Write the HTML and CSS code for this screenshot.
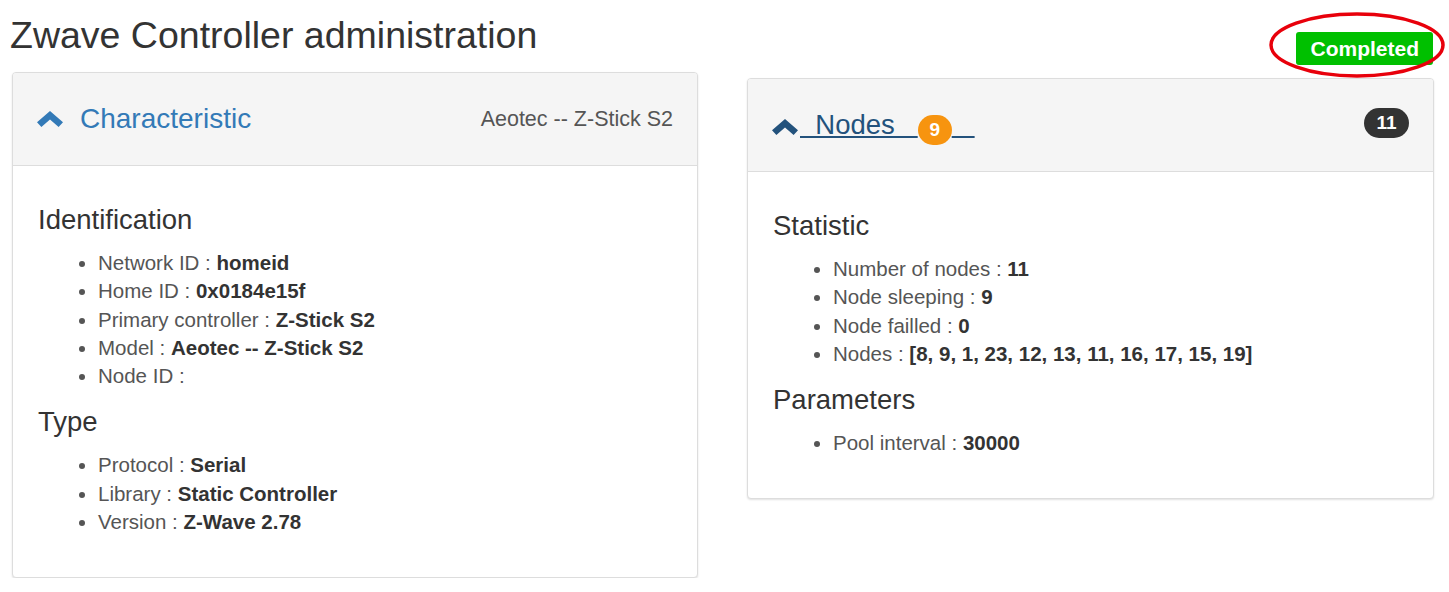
FILE: index.html
```html
<!DOCTYPE html>
<html lang="en">
<head>
<meta charset="utf-8">
<title>Zwave Controller administration</title>
<link rel="stylesheet" href="styles.css">
</head>
<body>
<div class="topbar">
  <h1 class="page-title">Zwave Controller administration</h1>
  <div class="status">
    <span class="status-label">Completed</span>
    <svg class="status-ring" width="176" height="66" viewBox="0 0 176 66"><ellipse cx="88" cy="33" rx="86" ry="31" fill="none" stroke="#e8000b" stroke-width="3.5"/></svg>
  </div>
</div>
<div class="panels">
  <section class="panel panel-left">
    <header class="panel-heading">
      <div class="panel-title">
        <svg class="chevron" width="26" height="16" viewBox="0 0 26 16"><path d="M13 0 L26 11.3 L21.6 16 L13 8.4 L4.4 16 L0 11.3 Z" fill="#337ab7"/></svg>
        <span class="title-text">Characteristic</span>
      </div>
      <span class="heading-note">Aeotec -- Z-Stick S2</span>
    </header>
    <div class="panel-body">
      <h4>Identification</h4>
      <ul>
        <li>Network ID : <b>homeid</b></li>
        <li>Home ID : <b>0x0184e15f</b></li>
        <li>Primary controller : <b>Z-Stick S2</b></li>
        <li>Model : <b>Aeotec -- Z-Stick S2</b></li>
        <li>Node ID : </li>
      </ul>
      <h4>Type</h4>
      <ul>
        <li>Protocol : <b>Serial</b></li>
        <li>Library : <b>Static Controller</b></li>
        <li>Version : <b>Z-Wave 2.78</b></li>
      </ul>
    </div>
  </section>
  <section class="panel panel-right">
    <header class="panel-heading">
      <div class="panel-title">
        <svg class="chevron chevron-dark" width="26" height="16" viewBox="0 0 26 16"><path d="M13 0 L26 11.3 L21.6 16 L13 8.4 L4.4 16 L0 11.3 Z" fill="#23527c"/></svg><a class="nodes-link" href="#">&nbsp;&nbsp;Nodes&nbsp;&nbsp;&nbsp;<span class="badge badge-orange">9</span>&nbsp;&nbsp;&nbsp;</a>
      </div>
      <span class="badge badge-dark">11</span>
    </header>
    <div class="panel-body">
      <h4>Statistic</h4>
      <ul>
        <li>Number of nodes : <b>11</b></li>
        <li>Node sleeping : <b>9</b></li>
        <li>Node failled : <b>0</b></li>
        <li>Nodes : <b>[8, 9, 1, 23, 12, 13, 11, 16, 17, 15, 19]</b></li>
      </ul>
      <h4>Parameters</h4>
      <ul>
        <li>Pool interval : <b>30000</b></li>
      </ul>
    </div>
  </section>
</div>
</body>
</html>
```
FILE: styles.css
```css
html, body {
  margin: 0;
  padding: 0;
  background: #fff;
}
body {
  font-family: "Liberation Sans", Arial, Helvetica, sans-serif;
  color: #333;
}
.topbar {
  display: flex;
  justify-content: space-between;
  align-items: flex-start;
  height: 72px;
  box-sizing: border-box;
  padding: 13px 16px 0 10px;
}
.page-title {
  margin: 0;
  font-size: 37.5px;
  line-height: 44px;
  font-weight: normal;
  color: #333;
}
.status {
  position: relative;
  margin-top: 19px;
}
.status-label {
  display: block;
  background: #00c000;
  color: #fff;
  font-weight: bold;
  font-size: 21px;
  line-height: 33px;
  height: 33px;
  padding: 0 14px;
  border-radius: 3px;
}
.status-ring {
  position: absolute;
  left: -27px;
  top: -20px;
}
.panels {
  display: flex;
  align-items: flex-start;
  gap: 49px;
  padding-left: 12px;
}
.panel {
  background: #fff;
  border: 1px solid #ddd;
  border-radius: 4px;
  box-shadow: 0 1px 2px rgba(0, 0, 0, 0.12);
  box-sizing: border-box;
}
.panel-left {
  width: 686px;
}
.panel-right {
  width: 687px;
  margin-top: 6px;
}
.panel-heading {
  display: flex;
  align-items: center;
  justify-content: space-between;
  height: 92px;
  padding: 0 24px;
  background: #f5f5f5;
  border-bottom: 1px solid #ddd;
  border-radius: 3px 3px 0 0;
}
.panel-title {
  display: flex;
  align-items: center;
  font-size: 28px;
}
.chevron {
  display: block;
  margin-right: 17px;
}
.chevron-dark {
  margin-right: 2px;
  margin-top: 3px;
}
.title-text {
  color: #337ab7;
}
.heading-note {
  font-size: 21.5px;
  color: #555;
}
.nodes-link {
  color: #23527c;
  text-decoration: underline;
  white-space: nowrap;
  font-size: 27.5px;
  margin-top: 4px;
}
.badge {
  display: inline-block;
  color: #fff;
  font-weight: bold;
  font-size: 19px;
  line-height: 30px;
  height: 30px;
  text-align: center;
  border-radius: 15px;
  vertical-align: -2px;
}
.badge-orange {
  background: #f7940f;
  min-width: 34px;
}
.badge-dark {
  background: #333;
  min-width: 45px;
  margin-bottom: 4px;
}
.panel-body {
  padding: 25px 25px 38px;
}
.panel-body h4 {
  margin: 14px 0;
  font-size: 27.5px;
  line-height: 30px;
  font-weight: normal;
  color: #333;
}
.panel-body ul {
  margin: 0;
  padding: 0 0 3px 60px;
  font-size: 20.5px;
  line-height: 28.25px;
  color: #555;
}
.panel-body ul b {
  color: #333;
}
```
